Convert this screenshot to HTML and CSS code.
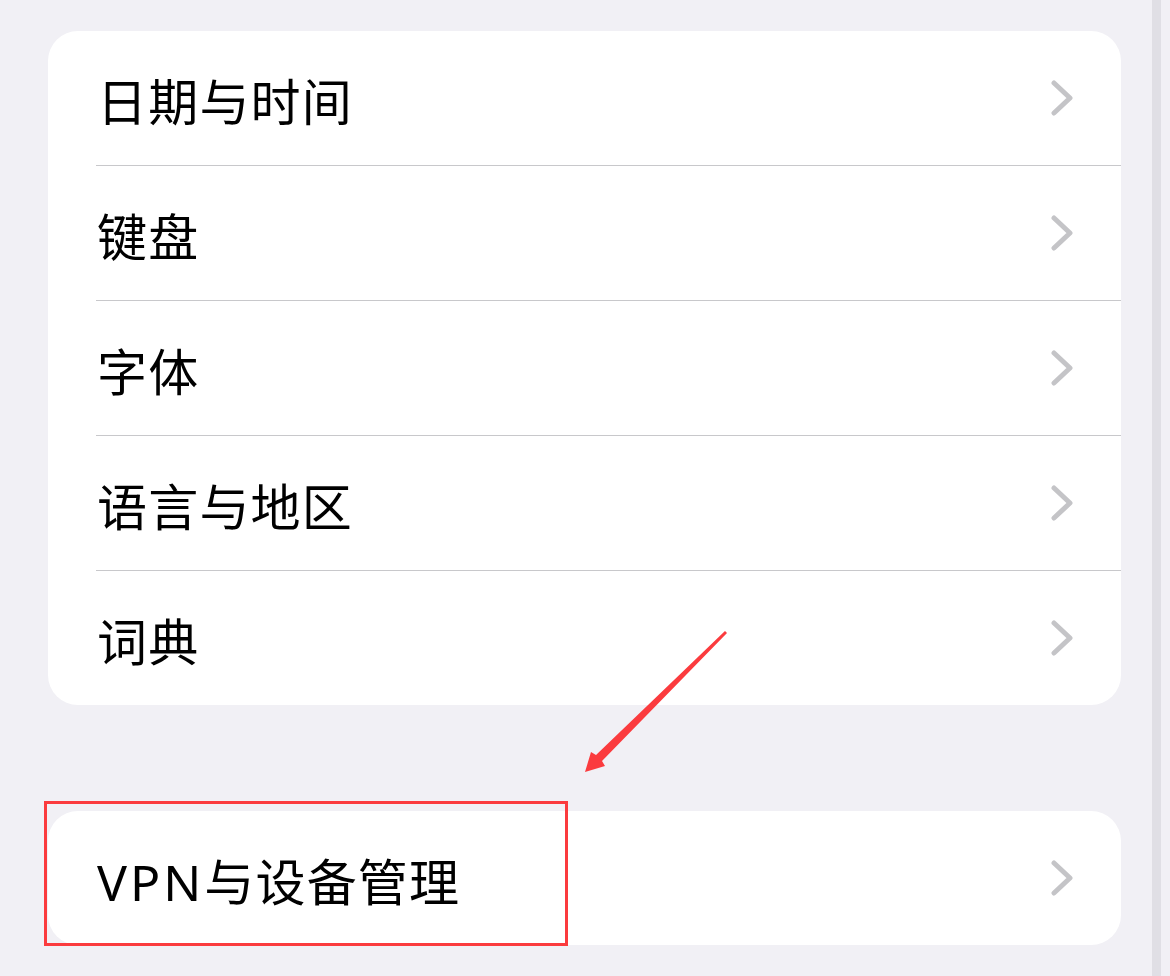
FILE: index.html
```html
<!DOCTYPE html>
<html lang="zh-CN">
<head>
    <meta charset="UTF-8">
    <meta name="viewport" content="width=device-width, initial-scale=1.0">
    <title>通用</title>
    <link rel="stylesheet" href="styles.css">
</head>
<body>
<div class="page">
    <div class="content">
        <div class="group">
            <div class="row"><span class="label">日期与时间</span><svg class="chevron" viewBox="0 0 22 36"><polyline points="3,3 19,18 3,33"/></svg></div>
            <div class="row"><span class="label">键盘</span><svg class="chevron" viewBox="0 0 22 36"><polyline points="3,3 19,18 3,33"/></svg></div>
            <div class="row"><span class="label">字体</span><svg class="chevron" viewBox="0 0 22 36"><polyline points="3,3 19,18 3,33"/></svg></div>
            <div class="row"><span class="label">语言与地区</span><svg class="chevron" viewBox="0 0 22 36"><polyline points="3,3 19,18 3,33"/></svg></div>
            <div class="row"><span class="label">词典</span><svg class="chevron" viewBox="0 0 22 36"><polyline points="3,3 19,18 3,33"/></svg></div>
        </div>
        <div class="group group-vpn">
            <div class="row"><span class="label"><span class="latin">VPN</span>与设备管理</span><svg class="chevron" viewBox="0 0 22 36"><polyline points="3,3 19,18 3,33"/></svg></div>
            <div class="highlight"></div>
        </div>
        <svg class="arrow" viewBox="0 0 160 160">
            <polygon points="165,21 167,23 42,151 45,156 25,162 31,142 36,145"/>
        </svg>
    </div>
    <div class="scrollbar"></div>
</div>
</body>
</html>
```

FILE: styles.css
```css
body {
    margin: 0;
    padding: 0;
    background-color: #f1f0f5;
    font-family: "Noto Sans", "Noto Sans CJK SC", sans-serif;
    color: #000;
}
.page {
    display: flex;
    height: 976px;
    overflow: hidden;
}
.content {
    position: relative;
    width: 1073px;
    padding: 31px 31px 0 48px;
}
.scrollbar {
    width: 9px;
    background-color: #e0dfe5;
}
.group {
    background: #fff;
    border-radius: 30px;
    overflow: hidden;
}
.group-vpn {
    position: relative;
    margin-top: 106px;
    overflow: visible;
}
.row {
    display: flex;
    align-items: center;
    justify-content: space-between;
    height: 134px;
    margin-left: 48px;
    padding-right: 48px;
}
.row + .row {
    border-top: 1px solid #c8c8cb;
}
.label {
    font-size: 50px;
    letter-spacing: 1.2px;
    margin-left: 1px;
    margin-top: 2px;
}
.latin {
    letter-spacing: 3px;
}
.chevron {
    width: 22px;
    height: 36px;
}
.chevron polyline {
    fill: none;
    stroke: #c4c4c7;
    stroke-width: 5;
    stroke-linecap: round;
    stroke-linejoin: round;
}
.highlight {
    position: absolute;
    left: -4px;
    top: -10px;
    width: 518px;
    height: 139px;
    border: 3px solid #fb3b3e;
}
.arrow {
    position: absolute;
    left: 560px;
    top: 610px;
    width: 160px;
    height: 160px;
    overflow: visible;
}
.arrow polygon {
    fill: #fb3b3e;
}
```
